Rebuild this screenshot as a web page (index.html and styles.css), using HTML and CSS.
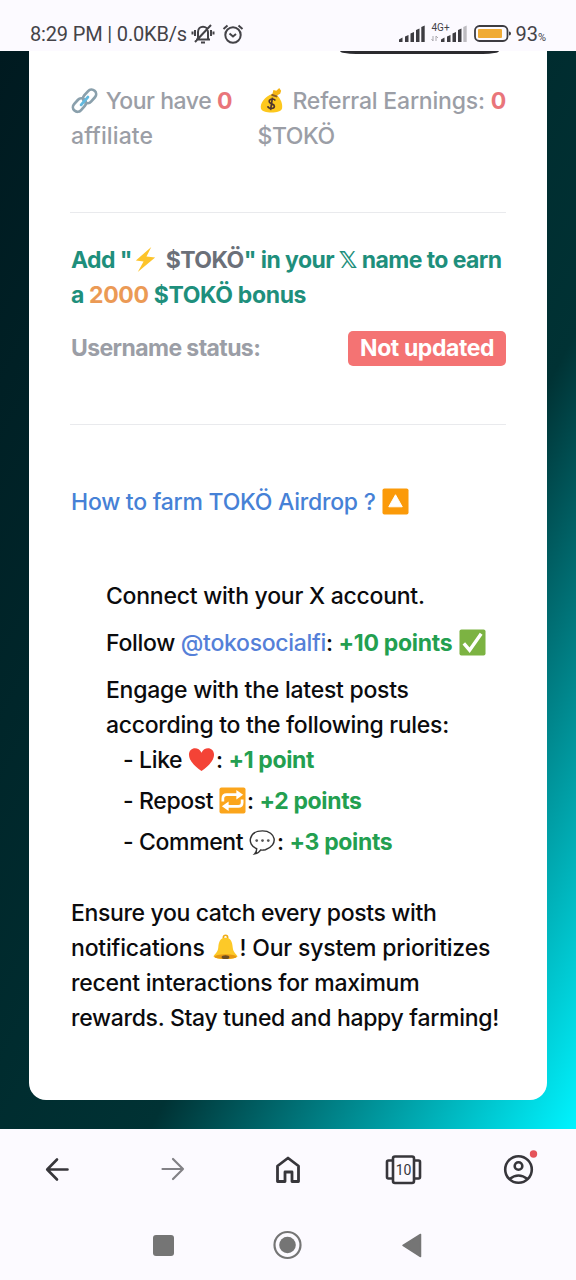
FILE: index.html
```html
<!DOCTYPE html>
<html lang="en">
<head>
<meta charset="utf-8">
<title>TOKÖ Airdrop</title>
<link rel="stylesheet" href="styles.css">
</head>
<body>
<header class="status">
  <div class="status-left">
    <span class="clock">8:29 PM | 0.0KB/s</span>
    <svg class="mute" width="24" height="22" viewBox="0 0 24 22" fill="none" stroke="#444348" stroke-width="2"><path d="M5 16.500h14M7 16V9c0-7 10-7 10 0v7M4 19L20 2M10 19.500h4M4 7v6M1.500 8.500v3M20 7v6M22.500 8.500v3"/></svg>
    <svg class="alarm" width="22" height="20" viewBox="0 0 22 20" fill="none" stroke="#444348" stroke-width="2"><circle cx="11" cy="11" r="7.700"/><path d="M1.500 5L5.500 1.500M20.500 5L16.500 1.500M7.500 9.500L11 12.500L14 10"/></svg>
  </div>
  <div class="status-right">
    <svg width="26" height="18" viewBox="0 0 26 18" fill="#3d3c41"><path d="M0 14.500l3.500-2V17H0zM6 11.500l3.500-1.500v7H6zM11.500 8.500L15 7v10h-3.500zM17 5l3.500-1.500V17H17zM22.300 2l3.400-1.500V17h-3.400z"/></svg>
    <div class="net"><span class="g4">4G+</span>
      <svg width="36" height="18" viewBox="0 0 36 18" fill="#3d3c41"><path d="M10 14.500l3.500-2V17H10zM16 11.500l3.500-1.500v7H16zM21.500 8.500L25 7v10h-3.500zM27 5l3.500-1.500V17H27z"/><path fill="#bdbbc0" d="M32.300 2l3.400-1.500V17h-3.400z"/><path d="M2 11v5M0.500 14l1.500 2M5 16v-5l2 2" stroke="#aaa8ad" fill="none"/></svg>
    </div>
    <svg class="battery" width="38" height="18" viewBox="0 0 38 18"><rect x="1" y="1" width="32.500" height="15" rx="4.500" fill="none" stroke="#3d3c41" stroke-width="1.800"/><rect x="4" y="4" width="24" height="9" rx="1" fill="#f0ab35"/><path d="M35 6.500q2 0 2 2t-2 2z" fill="#3d3c41"/></svg>
    <span class="pct">93<small>%</small></span>
  </div>
</header>

<main class="page">
  <section class="card">
    <div class="peek"></div>
    <div class="stats">
      <div class="stat">
        <p class="line t45"><svg class="emoji lead" viewBox="0 0 28 28"><g fill="none" stroke="#8aa0ac" stroke-width="2.800"><rect x="11.500" y="5" width="15.500" height="9.500" rx="4.700" transform="rotate(-48 19.200 9.700)"/><rect x="1" y="14" width="15.500" height="9.500" rx="4.700" transform="rotate(-48 8.700 18.700)"/></g><path d="M10.500 18.500l7-8" stroke="#62b9df" stroke-width="3" stroke-linecap="round"/></svg> Your have <b class="red">0</b></p>
        <p class="line loose">affiliate</p>
      </div>
      <div class="stat">
        <p class="line t20"><svg class="emoji lead" viewBox="0 0 28 28"><path d="M15 7C7 10 2 17 3 22c1 6 21 6 22 0 1-6-3-12-7-15z" fill="#fdc81e"/><path d="M15 7l1-4 3 1 3-3 2 3-1 3-4 2z" fill="#f5b514"/><path d="M14 8l6 2" stroke="#8a5b26" stroke-width="2"/><path d="M18 14c-2-3-8-1-6 2 1 2 5 1 5 4s-6 3-7 0M15 11l-2 13" fill="none" stroke="#4e342e" stroke-width="1.700"/></svg> Referral Earnings: <b class="red">0</b></p>
        <p class="line t45">$TOKÖ</p>
      </div>
    </div>
    <hr>
    <div class="bonus">
      <p class="line t57">Add "<svg class="emoji lead" viewBox="0 0 28 28"><path d="M20 1L4 15l8 1-6 11 18-15-9-1z" fill="#fdc42b"/></svg> <b class="grey">$TOKÖ</b>" in your <i class="bbx">𝕏</i> name to earn</p>
      <p class="line t35">a <b class="orange">2000</b> $TOKÖ bonus</p>
    </div>
    <div class="user"><span class="label t60">Username status:</span><span class="badge t40">Not updated</span></div>
    <hr>
    <p class="line how t25">How to farm TOKÖ Airdrop ? <svg class="emoji" viewBox="0 0 28 28"><rect x=".500" y=".500" width="27" height="27" rx="2" fill="#fb9a09"/><path d="M14 7l7 12.500H7z" fill="#fff" stroke="#fff" stroke-linejoin="round"/></svg></p>
    <div class="steps">
      <p class="line t25">Connect with your X account.</p>
      <p class="line gap t30">Follow <a class="link">@tokosocialfi</a>: <b class="green">+10 points</b> <svg class="emoji" viewBox="0 0 28 28"><rect x=".500" y=".500" width="27" height="27" rx="2" fill="#7cb342"/><path d="M5 15l6 7L23 5" fill="none" stroke="#fff" stroke-width="3.500"/></svg></p>
      <p class="line gap t25">Engage with the latest posts</p>
      <p class="line t30">according to the following rules:</p>
      <div class="rules">
        <p class="line t35">- Like <svg class="emoji" viewBox="0 0 28 28"><path d="M14 26C7 21 1 15 1 9 1 1 11 0 14 7c3-7 13-6 13 2 0 6-6 12-13 17z" fill="#f44336"/></svg>: <b class="green">+1 point</b></p>
        <p class="line t35">- Repost <svg class="emoji" viewBox="0 0 28 28"><rect x=".500" y=".500" width="27" height="27" rx="2" fill="#fba51c"/><path d="M4 15v-3q0-4 4-4h11M24 13v3q0 4-4 4H9" fill="none" stroke="#fff" stroke-width="2.800"/><path d="M18 3l7 5-7 5zM10 15l-7 5 7 5z" fill="#fff"/></svg>: <b class="green">+2 points</b></p>
        <p class="line t35">- Comment <svg class="emoji" viewBox="0 0 28 28"><path d="M8 21.500C-3 17 0 3 14 3s17 15 3 19.500c-2 .500-4 .500-5 .300-1 2-3 3.500-6 4 2-2 2-3.500 2-5.300z" fill="#fff" stroke="#333" stroke-width="1.500"/><g fill="#555"><circle cx="8" cy="13" r="1.400"/><circle cx="14" cy="13" r="1.400"/><circle cx="20" cy="13" r="1.400"/></g></svg>: <b class="green">+3 points</b></p>
      </div>
    </div>
    <div class="note">
      <p class="line t35">Ensure you catch every posts with</p>
      <p class="line t20">notifications <svg class="emoji" viewBox="0 0 28 28"><circle cx="14" cy="3.500" r="2.200" fill="none" stroke="#f0ac16" stroke-width="1.800"/><path d="M14 4C8 4 7 9 6.500 14c-.500 5-3 6-5 9 2 4 23 4 25 0-2-3-4.500-4-5-9C21 9 20 4 14 4z" fill="#fdc928"/><ellipse cx="14" cy="23.500" rx="11.500" ry="2.500" fill="#e89a12"/><ellipse cx="14" cy="24" rx="4" ry="2" fill="#6d4c20"/></svg>! Our system prioritizes</p>
      <p class="line t25">recent interactions for maximum</p>
      <p class="line t30">rewards. Stay tuned and happy farming!</p>
    </div>
  </section>
</main>

<footer class="dock">
  <nav class="toolbar">
    <svg viewBox="0 0 36 36" fill="none" stroke="#37363b" stroke-width="2.600" stroke-linecap="round" stroke-linejoin="round"><path d="M28.500 18.500H8.500M18 8.500l-9.800 10 9.800 10"/></svg>
    <svg viewBox="0 0 36 36" fill="none" stroke="#828186" stroke-width="2.200" stroke-linecap="round" stroke-linejoin="round"><path d="M7.500 18h20.500M18 8l10 10-10 10"/></svg>
    <svg viewBox="0 0 36 36" fill="none" stroke="#37363b" stroke-width="2.800" stroke-linejoin="round"><path d="M7.500 30.500V15L18 7l10.500 8v15.500H22V21h-7v9.500z"/></svg>
    <svg viewBox="0 0 36 36" fill="none" stroke="#37363b" stroke-width="2.600" stroke-linejoin="round"><rect x="7" y="5.500" width="21" height="26.500" rx="2"/><path d="M7 9.500H2.500Q1 9.500 1 11v15q0 1.500 1.500 1.500H7M28 9.500h4.500q1.500 0 1.500 1.500v15q0 1.500-1.500 1.500H28"/><text class="tabs" x="17.500" y="23.500" text-anchor="middle">10</text></svg>
    <svg viewBox="0 0 36 36" fill="none" stroke="#37363b" stroke-width="2.600"><circle cx="17.500" cy="18.500" r="13.300"/><circle cx="17.500" cy="15" r="3.800"/><path d="M8.500 28q9-7 18 0"/><circle cx="32.500" cy="3" r="3.700" fill="#e5535a" stroke="none"/></svg>
  </nav>
  <nav class="system">
    <svg viewBox="0 0 30 30"><rect x="4" y="5" width="21" height="21" rx="3" fill="#757575"/></svg>
    <svg viewBox="0 0 30 30"><circle cx="14.500" cy="15" r="13" fill="none" stroke="#757575" stroke-width="2.200"/><circle cx="14.500" cy="15" r="8.300" fill="#757575"/></svg>
    <svg viewBox="0 0 30 30"><path d="M6 15.300L23.500 4.500v22z" fill="#757575" stroke="#757575" stroke-linejoin="round" stroke-width="1.500"/></svg>
  </nav>
</footer>
</body>
</html>
```
FILE: styles.css
```css
* { box-sizing: border-box; }
body { margin: 0; width: 576px; height: 1280px; overflow: hidden; background: #fcfaff; font-family: Inter, "Noto Sans", sans-serif; font-size: 23px; font-weight: 500; color: #0b0b0d; }
p { margin: 0; }
b { font-weight: 700; }
.status { height: 51px; padding: 17px 30px 0; display: flex; justify-content: space-between; align-items: flex-start; font-family: Roboto, sans-serif; font-weight: 400; color: #444348; }
.status-left, .status-right { display: flex; align-items: center; height: 34px; white-space: nowrap; }
.clock { font-size: 20px; width: 157px; letter-spacing: -0.16px; }
.mute { margin-left: 4px; }
.alarm { margin-left: 7px; }
.net { position: relative; margin-left: 6px; display: flex; }
.g4 { position: absolute; left: 0; top: -2px; font-size: 10px; line-height: 10px; }
.battery { margin-left: 7px; }
.pct { font-size: 20px; margin-left: 3px; }
.pct small { font-size: 11px; }
.page { height: 1078px; padding: 0 29px 29px; background: linear-gradient(to bottom right, #001a20 0%, #003234 63%, #00f4ff 100%); }
.card { width: 518px; height: 1049px; padding: 0 41px; background: #fff; border-radius: 0 0 17px 17px; }
.peek { height: 3px; width: 159px; margin-left: 270px; background: #2b2b2f; border-radius: 0 0 16px 16px / 0 0 3px 3px; }
.line { height: 35px; line-height: 37px; padding-left: 1px; white-space: nowrap; }
.note .line { height: 35.200px; }

/* Tracking steps, named by hundredths of a pixel */
.loose { letter-spacing: 0.1px; }
.t20 { letter-spacing: -0.2px; }
.t25 { letter-spacing: -0.25px; }
.t30 { letter-spacing: -0.3px; }
.t35 { letter-spacing: -0.36px; }
.t40 { letter-spacing: -0.4px; }
.t45 { letter-spacing: -0.45px; }
.t57 { letter-spacing: -0.57px; }
.t60 { letter-spacing: -0.6px; }

.emoji { display: inline-block; width: 27px; height: 27px; margin: 0 1px; vertical-align: -5px; }
.emoji.lead { margin-right: 2px; margin-left: 0; }
.rules .emoji { margin: 0 1px 0 0; }
.stats { display: flex; margin-top: 29px; color: #9b9ea6; }
.stat:first-child { width: 188px; }
.red { color: #e9757a; }
hr { border: 0; height: 1px; margin: 0; background: #e9eaed; }
.stats + hr { margin-top: 59px; }
.bonus { margin-top: 29px; font-weight: 700; color: #1e8f7c; }
.grey { color: #6b7079; }
.orange { color: #eb9a55; }
.bbx { font-style: normal; font-family: "DejaVu Sans", sans-serif; }
.user { height: 35px; margin-top: 19px; display: flex; justify-content: space-between; align-items: center; font-weight: 700; color: #9b9ea6; white-space: nowrap; }
.label { padding-left: 1px; line-height: 35px; }
.badge { width: 158px; height: 35px; padding-left: 12px; line-height: 35px; border-radius: 5px; background: #f47373; color: #fff; }
.user + hr { margin-top: 58px; }
.how { margin-top: 59px; color: #4681d6; }
.steps { padding-left: 35px; margin-top: 59px; }
.gap { margin-top: 12px; }
.link { color: #5580d8; }
.green { color: #239f50; }
.rules { padding-left: 17px; display: flex; flex-direction: column; gap: 6px; }
.note { margin-top: 35.500px; }
.dock { height: 151px; }
.toolbar { display: flex; justify-content: space-between; padding: 22px 39px 0; }
.toolbar svg { width: 36px; height: 36px; overflow: visible; }
.tabs { font: 400 14px Roboto, sans-serif; fill: #37363b; stroke: none; }
.system { display: flex; justify-content: center; gap: 94px; margin-top: 43px; }
.system svg { width: 30px; height: 30px; }
```
